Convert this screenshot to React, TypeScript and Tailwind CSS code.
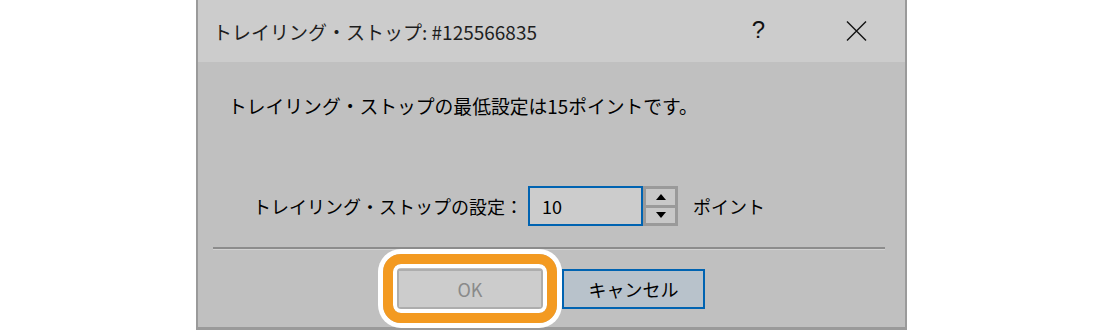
import React from "react";

const font = { fontFamily: '"Noto Sans CJK JP", "Noto Sans", sans-serif' };

export default function App() {
  return (
    <div className="w-[1100px] h-[330px] bg-white flex overflow-hidden" style={font}>
      <div className="ml-[196px] w-[711px] h-[330px] border-l-2 border-r-2 border-b-[3px] border-[#9a9a9a] flex flex-col bg-[#c0c0c0]">
        {/* title bar */}
        <div className="h-[62px] bg-[#cccccc] flex items-center pl-[15px] text-[#1e1e1e]">
          <span className="text-[19px] leading-none">トレイリング・ストップ: #125566835</span>
          <span className="ml-auto text-[24px] leading-none mr-[81px] mt-[-3px] text-[#111]" style={{ fontFamily: '"Liberation Sans", sans-serif' }}>?</span>
          <svg width="21" height="20" viewBox="0 0 21 20" className="mr-[38px]">
            <path d="M1 0.5 L20 19.5 M20 0.5 L1 19.5" stroke="#111" strokeWidth="1.4" fill="none" />
          </svg>
        </div>
        {/* body */}
        <div className="flex-1 flex flex-col">
          <div className="pt-[32px] pl-[30px] h-[56px] text-[18.8px] leading-[24px] text-black">
            トレイリング・ストップの最低設定は15ポイントです。
          </div>
          <div className="mt-[68px] pl-[55px] flex items-center h-[40px]">
            <span className="w-[275px] text-[18px] leading-[24px] text-black">トレイリング・ストップの設定：</span>
            <div className="w-[115px] h-[40px] border-2 border-[#0063b1] bg-[#cccccc] flex items-center pl-[12px] text-[18px] text-black">
              10
            </div>
            <div className="w-[35px] h-[40px] border-[3px] border-[#9a9a9a] bg-[#c8c8c8] flex flex-col">
              <div className="flex-1 flex items-center justify-center border-b-[3px] border-[#9a9a9a]">
                <svg width="10" height="6" viewBox="0 0 10 6"><path d="M5 0 L10 6 L0 6 Z" fill="#000" /></svg>
              </div>
              <div className="flex-1 flex items-center justify-center">
                <svg width="10" height="6" viewBox="0 0 10 6"><path d="M0 0 L10 0 L5 6 Z" fill="#000" /></svg>
              </div>
            </div>
            <span className="ml-[15px] text-[18px] leading-[24px] text-black">ポイント</span>
          </div>
          <div className="mt-[21px] ml-[15px] mr-[20px] h-[3px] border-t-2 border-[#8c8c8c] border-b border-b-[#d2d2d2]" />
          <div className="mt-[19px] flex pl-[199px]">
            <div className="relative">
              <div className="w-[146px] h-[40px] border-2 border-[#adadad] bg-[#cccccc] flex items-center justify-center text-[18px] text-[#8a8a8a]">
                OK
              </div>
              <div className="absolute left-[-14px] right-[-14px] top-[-15px] bottom-[-14px] rounded-[18px] border-[10px] border-[#f39a21] shadow-[0_0_0_5px_white,inset_0_0_0_4px_white] pointer-events-none" />
            </div>
            <div className="ml-[19px] w-[143px] h-[40px] border-2 border-[#0063b1] bg-[#b8c2cb] flex items-center justify-center text-[18px] text-black">
              キャンセル
            </div>
          </div>
        </div>
      </div>
    </div>
  );
}
